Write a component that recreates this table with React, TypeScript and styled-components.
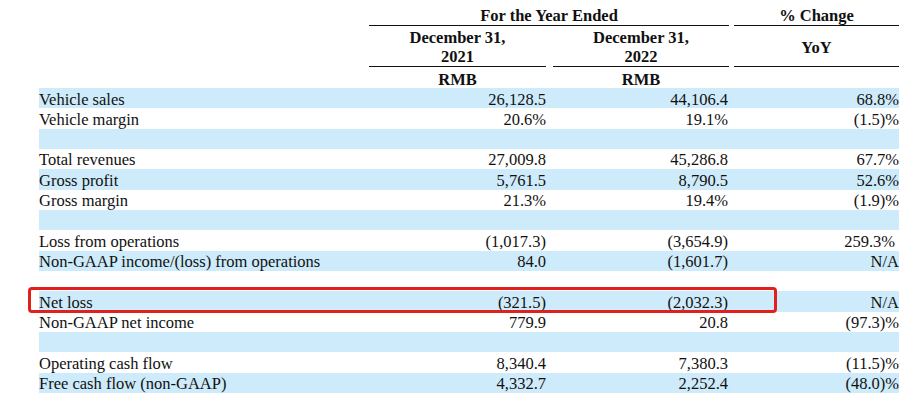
import React from 'react';
import styled, { createGlobalStyle } from 'styled-components';

const GlobalStyle = createGlobalStyle`
  html, body {
    margin: 0;
    padding: 0;
    background: #ffffff;
  }
  body {
    font-family: "Liberation Serif", "Times New Roman", serif;
    color: #111111;
  }
`;

type Row = {
  label: string;
  a: string;
  b: string;
  c: string;
  cPad?: number;
};

const rows: (Row | null)[] = [
  { label: 'Vehicle sales', a: '26,128.5', b: '44,106.4', c: '68.8%' },
  { label: 'Vehicle margin', a: '20.6%', b: '19.1%', c: '(1.5)%' },
  null,
  { label: 'Total revenues', a: '27,009.8', b: '45,286.8', c: '67.7%' },
  { label: 'Gross profit', a: '5,761.5', b: '8,790.5', c: '52.6%' },
  { label: 'Gross margin', a: '21.3%', b: '19.4%', c: '(1.9)%' },
  null,
  { label: 'Loss from operations', a: '(1,017.3)', b: '(3,654.9)', c: '259.3%', cPad: 4 },
  { label: 'Non-GAAP income/(loss) from operations', a: '84.0', b: '(1,601.7)', c: 'N/A' },
  null,
  { label: 'Net loss', a: '(321.5)', b: '(2,032.3)', c: 'N/A' },
  { label: 'Non-GAAP net income', a: '779.9', b: '20.8', c: '(97.3)%' },
  null,
  { label: 'Operating cash flow', a: '8,340.4', b: '7,380.3', c: '(11.5)%' },
  { label: 'Free cash flow (non-GAAP)', a: '4,332.7', b: '2,252.4', c: '(48.0)%' },
];

const Page = styled.div`
  position: relative;
  width: 860px;
  padding: 0 0 0 39px;
  font-size: 16.5px;
`;

// label | 2021 | gap | 2022 | gap | yoy
const HeadRow = styled.div<{ $h: number }>`
  display: grid;
  grid-template-columns: 330px 177px 7px 176px 5px 165px;
  height: ${p => p.$h}px;
`;

const HeadCell = styled.div<{ $col: string; $line?: boolean; $middle?: boolean }>`
  grid-column: ${p => p.$col};
  font-weight: bold;
  text-align: center;
  line-height: 19px;
  border-bottom: ${p => (p.$line ? '1px solid #111' : 'none')};
  display: flex;
  flex-direction: column;
  justify-content: ${p => (p.$middle ? 'center' : 'flex-end')};
  padding-top: ${p => (p.$middle ? '3px' : '0')};
  box-sizing: border-box;
`;

const BodyRow = styled.div<{ $shade: boolean }>`
  display: grid;
  grid-template-columns: 330px 177px 182px 171px;
  height: 20.33px;
  line-height: 20px;
  padding-top: 1.5px;
  box-sizing: border-box;
  background: ${p => (p.$shade ? '#cdebfa' : 'transparent')};
`;

const Label = styled.div`
  white-space: nowrap;
`;

const Num = styled.div<{ $pad?: number }>`
  text-align: right;
  padding-right: ${p => p.$pad ?? 0}px;
  white-space: nowrap;
`;

const Highlight = styled.div`
  position: absolute;
  left: 28px;
  top: 287px;
  width: 749px;
  height: 26px;
  box-sizing: border-box;
  border: 3px solid #e0201c;
  border-radius: 4px;
  pointer-events: none;
`;

export default function App() {
  return (
    <>
      <GlobalStyle />
      <Page>
        <HeadRow $h={26}>
          <HeadCell $col="2 / 5" $line>For the Year Ended</HeadCell>
          <HeadCell $col="6" $line>% Change</HeadCell>
        </HeadRow>
        <HeadRow $h={41}>
          <HeadCell $col="2" $line>
            <span>December 31,</span>
            <span>2021</span>
          </HeadCell>
          <HeadCell $col="4" $line>
            <span>December 31,</span>
            <span>2022</span>
          </HeadCell>
          <HeadCell $col="6" $line $middle>YoY</HeadCell>
        </HeadRow>
        <HeadRow $h={21}>
          <HeadCell $col="2" $middle>RMB</HeadCell>
          <HeadCell $col="4" $middle>RMB</HeadCell>
        </HeadRow>
        {rows.map((r, i) => (
          <BodyRow key={i} $shade={i % 2 === 0}>
            {r ? (
              <>
                <Label>{r.label}</Label>
                <Num>{r.a}</Num>
                <Num>{r.b}</Num>
                <Num $pad={r.cPad}>{r.c}</Num>
              </>
            ) : null}
          </BodyRow>
        ))}
        <Highlight />
      </Page>
    </>
  );
}
